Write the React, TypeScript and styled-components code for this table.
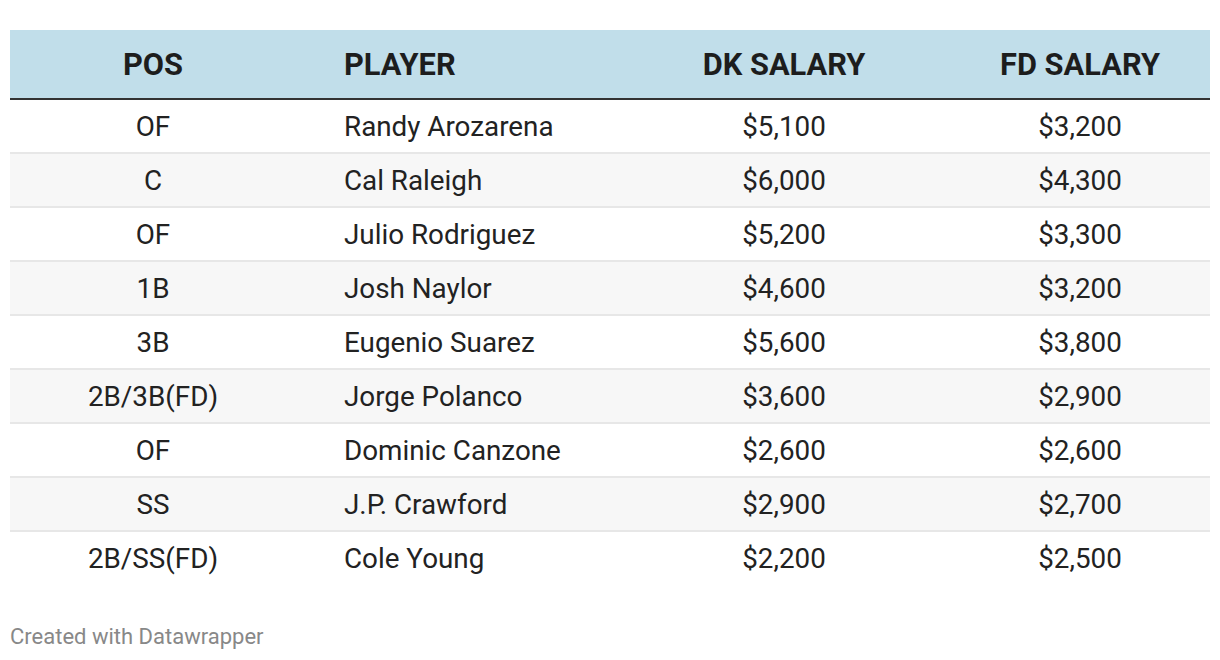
import React from "react";
import styled, { createGlobalStyle } from "styled-components";

const GlobalStyle = createGlobalStyle`
  body {
    margin: 0;
    background: #fff;
    font-family: Roboto, "Liberation Sans", sans-serif;
  }
`;

const Page = styled.div`
  padding: 30px 10px 0 10px;
`;

const Table = styled.div`
  display: grid;
  grid-template-columns: 286px 322px 332px 260px;
  width: 1200px;
`;

const HeadCell = styled.div<{ $align?: "left" | "center" }>`
  background: #c1deea;
  height: 68px;
  display: flex;
  align-items: center;
  justify-content: ${(p) => (p.$align === "left" ? "flex-start" : "center")};
  padding-left: ${(p) => (p.$align === "left" ? "48px" : "0")};
  font-size: 30.8px;
  font-weight: 700;
  color: #1d1d1d;
  border-bottom: 2px solid #333;
`;

const Cell = styled.div<{ $align?: "left" | "center"; $striped?: boolean; $last?: boolean }>`
  height: 52px;
  display: flex;
  align-items: center;
  justify-content: ${(p) => (p.$align === "left" ? "flex-start" : "center")};
  padding-left: ${(p) => (p.$align === "left" ? "48px" : "0")};
  font-size: 27.8px;
  color: #222;
  background: ${(p) => (p.$striped ? "#f7f7f7" : "#fff")};
  border-bottom: 2px solid ${(p) => (p.$last ? "transparent" : "#e7e7e7")};
`;

const Footer = styled.div`
  margin-top: 38px;
  font-size: 22px;
  color: #888;
`;

const rows = [
  ["OF", "Randy Arozarena", "$5,100", "$3,200"],
  ["C", "Cal Raleigh", "$6,000", "$4,300"],
  ["OF", "Julio Rodriguez", "$5,200", "$3,300"],
  ["1B", "Josh Naylor", "$4,600", "$3,200"],
  ["3B", "Eugenio Suarez", "$5,600", "$3,800"],
  ["2B/3B(FD)", "Jorge Polanco", "$3,600", "$2,900"],
  ["OF", "Dominic Canzone", "$2,600", "$2,600"],
  ["SS", "J.P. Crawford", "$2,900", "$2,700"],
  ["2B/SS(FD)", "Cole Young", "$2,200", "$2,500"],
];

const heads = ["POS", "PLAYER", "DK SALARY", "FD SALARY"];

export default function App() {
  return (
    <Page>
      <GlobalStyle />
      <Table>
        {heads.map((h, i) => (
          <HeadCell key={h} $align={i === 1 ? "left" : "center"}>
            {h}
          </HeadCell>
        ))}
        {rows.map((r, ri) =>
          r.map((v, ci) => (
            <Cell
              key={`${ri}-${ci}`}
              $align={ci === 1 ? "left" : "center"}
              $striped={ri % 2 === 1}
              $last={ri === rows.length - 1}
            >
              {v}
            </Cell>
          ))
        )}
      </Table>
      <Footer>Created with Datawrapper</Footer>
    </Page>
  );
}
